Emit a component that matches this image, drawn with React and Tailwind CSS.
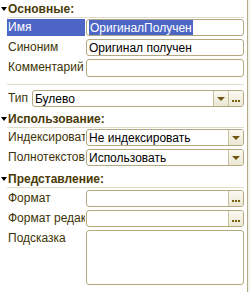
import React from "react";

const font = { fontFamily: '"Liberation Sans", Arial, sans-serif' };

const Header = ({ title }) => (
  <div className="flex flex-col">
    <div className="flex h-[17px] items-center">
      <span className="ml-[1px] mr-[1px] w-0 h-0 border-l-[3px] border-r-[3px] border-t-[4px] border-l-transparent border-r-transparent border-t-black" />
      <span className="text-[12px] font-bold text-[#4a3a06] leading-none">{title}</span>
    </div>
    <div className="ml-[7px] h-[1px] bg-[#e2ddcb]" />
  </div>
);

const Arrow = () => (
  <div className="flex w-[15px] items-center justify-center border-l border-[#c9c0a0] bg-gradient-to-b from-[#fbfaf3] to-[#ece7d2]">
    <span className="w-0 h-0 border-l-[4px] border-r-[4px] border-t-[4px] border-l-transparent border-r-transparent border-t-[#6e5612]" />
  </div>
);

const Dots = () => (
  <div className="flex w-[15px] items-end justify-center gap-[1px] pb-[4px] border-l border-[#c9c0a0] bg-gradient-to-b from-[#fbfaf3] to-[#ece7d2]">
    <span className="w-[2px] h-[2px] bg-[#7a6010]" />
    <span className="w-[2px] h-[2px] bg-[#7a6010]" />
    <span className="w-[2px] h-[2px] bg-[#7a6010]" />
  </div>
);

const Box = ({ children, className = "", right }) => (
  <div
    className={
      "flex overflow-hidden rounded-[3px] border border-[#b3a882] bg-white " +
      className
    }
  >
    <div className="flex flex-1 items-center overflow-hidden whitespace-nowrap px-[2px] text-[12px] text-black">
      {children}
    </div>
    {right}
  </div>
);

const Label = ({ children, selected }) => (
  <div
    className={
      "ml-[7px] w-[78px] shrink-0 overflow-hidden whitespace-nowrap pl-[1px] text-[12px] leading-[17px] h-[17px] " +
      (selected ? "bg-[#4d66c6] text-white" : "text-[#3d3306]")
    }
  >
    {children}
  </div>
);

const Row = ({ label, selected, children, right, className = "h-[17px]" }) => (
  <div className={"flex " + className}>
    <Label selected={selected}>{label}</Label>
    <Box className="ml-[1px] flex-1" right={right}>
      {children}
    </Box>
  </div>
);

export default function App() {
  return (
    <div className="flex h-[292px] w-[250px] bg-white" style={font}>
      <div className="flex flex-1 flex-col pr-[3px]">
        <Header title="Основные:" />
        <div className="mt-[1px] flex flex-col gap-[3px]">
          <Row label="Имя" selected>
            <span className="bg-[#4d66c6] text-white px-[1px]">ОригиналПолучен</span>
          </Row>
          <Row label="Синоним">Оригинал получен</Row>
          <Row label="Комментарий" className="h-[18px]" />
        </div>
        <div className="ml-[7px] mt-[7px] h-[1px] bg-[#e2ddcb]" />
        <div className="mt-[5px] flex h-[17px]">
          <div className="ml-[8px] w-[24px] text-[12px] leading-[17px] text-[#3d3306]">Тип</div>
          <Box className="flex-1" right={<><Arrow /><Dots /></>}>
            Булево
          </Box>
        </div>
        <div className="mt-[3px]">
          <Header title="Использование:" />
        </div>
        <div className="mt-[1px] flex flex-col gap-[3px]">
          <Row label="Индексировать" right={<Arrow />}>
            Не индексировать
          </Row>
          <Row label="Полнотекстовый" right={<Arrow />}>
            Использовать
          </Row>
        </div>
        <div className="mt-[4px]">
          <Header title="Представление:" />
        </div>
        <div className="mt-[2px] flex flex-col gap-[3px]">
          <Row label="Формат" right={<Dots />} />
          <Row label="Формат редак" right={<Dots />} />
          <Row label="Подсказка" className="h-[55px]" />
        </div>
      </div>
      <div className="w-[1px] bg-[#b3aa8a]" />
      <div className="w-[2px] bg-[#f4f2ea]" />
    </div>
  );
}
